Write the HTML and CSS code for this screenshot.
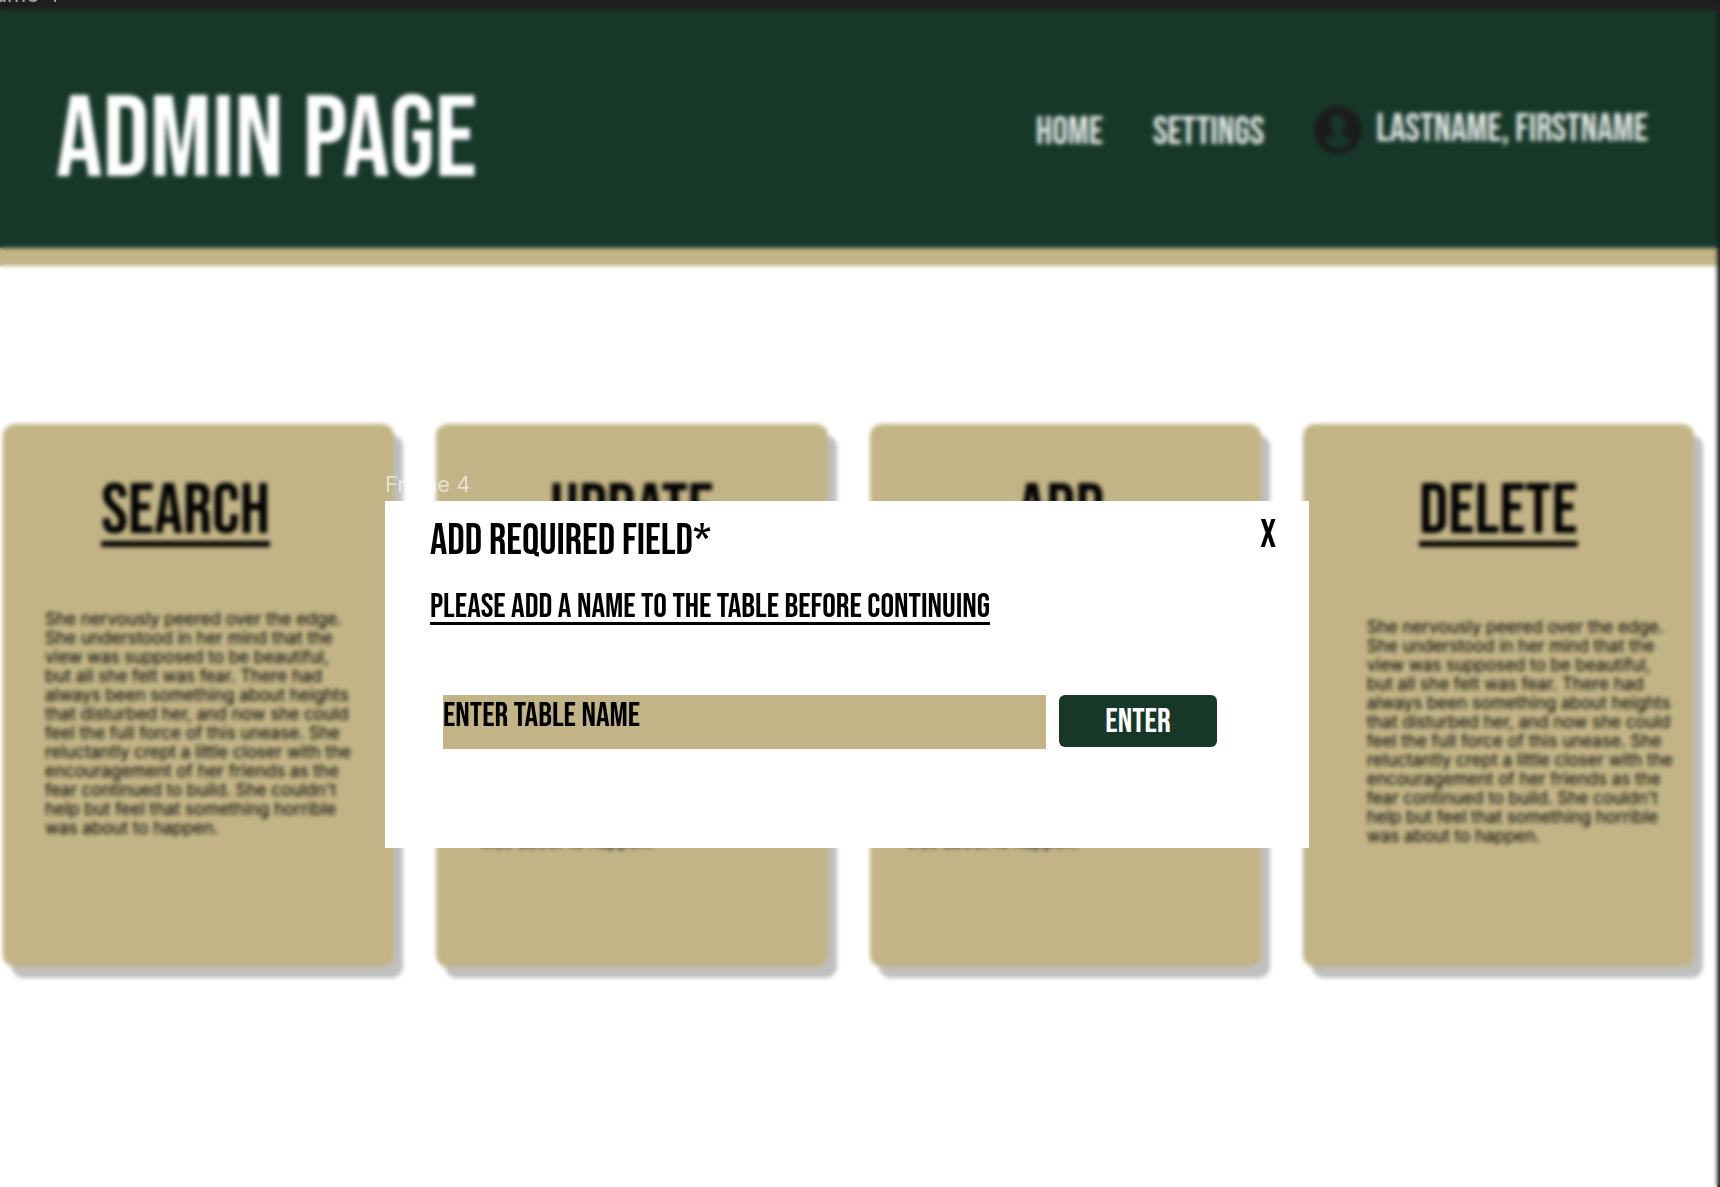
FILE: index.html
```html
<!DOCTYPE html>
<html lang="en">
<head>
<meta charset="utf-8">
<meta name="viewport" content="width=device-width, initial-scale=1">
<title>Admin Page</title>
<link rel="stylesheet" href="styles.css">
</head>
<body>
<div class="page">
  <header class="header">
    <h1 class="brand">Admin Page</h1>
    <nav class="nav">
      <a class="nav-link" href="#home">Home</a>
      <a class="nav-link" href="#settings">Settings</a>
      <a class="nav-user" href="#profile">
        <svg class="avatar" viewBox="0 0 48 48" aria-hidden="true">
          <circle cx="24" cy="24" r="24" fill="#1a1c1b"/>
          <path fill="#173829" d="M24 9c-4.400 0-7 3.400-7 8 0 3.500 1.400 6.600 3.400 8.200v3.300c0 .800-.500 1.400-1.300 1.700l-5.100 2c-1.700.700-2.700 1.900-2.700 3.600C14.500 39.600 19 42 24 42s9.500-2.400 12.700-6.200c0-1.700-1-2.900-2.700-3.600l-5.100-2c-.800-.300-1.300-.900-1.300-1.700v-3.300c2-1.600 3.400-4.700 3.400-8.200 0-4.600-2.600-8-7-8z"/>
        </svg>
        <span class="user-name">Lastname, Firstname</span>
      </a>
    </nav>
  </header>

  <main class="cards">
    <article class="card card-raised">
      <h2 class="card-title"><a href="#search">Search</a></h2>
      <p class="card-text">She nervously peered over the edge. She understood in her mind that the view was supposed to be beautiful, but all she felt was fear. There had always been something about heights that disturbed her, and now she could feel the full force of this unease. She reluctantly crept a little closer with the encouragement of her friends as the fear continued to build. She couldn't help but feel that something horrible was about to happen.</p>
    </article>
    <article class="card">
      <h2 class="card-title"><a href="#update">Update</a></h2>
      <p class="card-text">She nervously peered over the edge. She understood in her mind that the view was supposed to be beautiful, but all she felt was fear. There had always been something about heights that disturbed her, and now she could feel the full force of this unease. She reluctantly crept a little closer with the encouragement of her friends as the fear continued to build. She couldn't help but feel that something horrible was about to happen.</p>
    </article>
    <article class="card card-wide">
      <h2 class="card-title"><a href="#add">Add</a></h2>
      <p class="card-text">She nervously peered over the edge. She understood in her mind that the view was supposed to be beautiful, but all she felt was fear. There had always been something about heights that disturbed her, and now she could feel the full force of this unease. She reluctantly crept a little closer with the encouragement of her friends as the fear continued to build. She couldn't help but feel that something horrible was about to happen.</p>
    </article>
    <article class="card card-inset">
      <h2 class="card-title"><a href="#delete">Delete</a></h2>
      <p class="card-text">She nervously peered over the edge. She understood in her mind that the view was supposed to be beautiful, but all she felt was fear. There had always been something about heights that disturbed her, and now she could feel the full force of this unease. She reluctantly crept a little closer with the encouragement of her friends as the fear continued to build. She couldn't help but feel that something horrible was about to happen.</p>
    </article>
  </main>
</div>

<div class="overlay">
  <div class="frame-label frame-label-outer">Frame 4</div>
  <div class="dialog-wrap">
    <div class="frame-label">Frame 4</div>
    <section class="dialog" role="dialog" aria-labelledby="dialog-title">
      <div class="dialog-head">
        <h2 class="dialog-title" id="dialog-title">Add required field*</h2>
        <button class="close" type="button" aria-label="Close">X</button>
      </div>
      <p class="dialog-note">Please add a name to the table before continuing</p>
      <form class="dialog-form">
        <input class="field" type="text" aria-label="Table name" placeholder="Enter table name">
        <button class="enter" type="button">Enter</button>
      </form>
    </section>
  </div>
</div>
</body>
</html>
```
FILE: styles.css
```css
:root {
  --green: #173829;
  --gold: #c2b486;
  --canvas: #1e1e1e;
  --display: "Bebas Neue", "Open Sans Condensed", "Roboto Condensed", sans-serif;
}

* { box-sizing: border-box; }

body {
  margin: 0;
  background: var(--canvas);
  font-family: Inter, sans-serif;
  color: #000;
}

h1, h2, p { margin: 0; font-weight: 400; }
a { color: inherit; text-decoration: none; }
button, input { font: inherit; border: 0; padding: 0; border-radius: 0; }

.page {
  min-height: calc(100vh - 10px);
  margin: 10px 3px 0 0;
  background: #fff;
}

.header {
  display: flex;
  align-items: center;
  justify-content: space-between;
  min-height: 256px;
  padding: 8px 69px 0 56px;
  background: var(--green);
  border-bottom: 18px solid var(--gold);
  color: #fff;
  font-family: var(--display);
}

.brand {
  padding-top: 18px;
  font-size: 116px;
  line-height: 140px;
}

.nav {
  display: flex;
  align-items: center;
  gap: 50px;
  font-size: 39px;
  line-height: 48px;
  color: #e4e9e7;
}

.nav-user {
  display: flex;
  align-items: center;
  gap: 14px;
  padding-bottom: 6px;
}

.avatar { width: 48px; height: 48px; }

.cards {
  display: grid;
  grid-template-columns: repeat(4, 1fr);
  gap: 42px;
  padding: 158px 23px 80px 3px;
}

.card {
  min-height: 543px;
  padding: 44px 36px 40px 44px;
  background: var(--gold);
  border-radius: 12px;
  box-shadow: 9px 11px 0 #bfbfbf;
}

.card-title {
  margin: 0 0 68px -8px;
  font-family: var(--display);
  font-size: 72px;
  line-height: 88px;
  text-align: center;
}

.card-title a {
  text-decoration: underline;
  text-decoration-thickness: 6px;
  text-underline-offset: 8px;
}

.card-text { font-size: 17px; line-height: 19px; }

.card-raised { padding-right: 36px; padding-left: 42px; }
.card-raised .card-title { margin: 0 32px 54px 0; }
.card-wide { padding-left: 36px; }
.card-inset { padding-right: 20px; padding-left: 64px; }
.card-inset .card-title { margin: 0 0 62px -44px; }

.overlay {
  position: absolute;
  inset: 0;
  overflow: hidden;
  padding-right: 26px;
  backdrop-filter: blur(2px);
}

.frame-label {
  color: rgba(255, 255, 255, 0.6);
  font-size: 22px;
  line-height: 34px;
}

.frame-label-outer { margin: -23px 0 0 -26px; }

.dialog-wrap {
  width: min(924px, 100%);
  margin: 456px auto 0;
}

.dialog {
  min-height: 347px;
  padding: 16px 33px 40px 45px;
  background: #fff;
  font-family: var(--display);
}

.dialog-head {
  display: flex;
  align-items: flex-start;
  justify-content: space-between;
}

.dialog-title { font-size: 43px; line-height: 48px; }

.close {
  background: none;
  font-size: 39px;
  line-height: 38px;
  cursor: pointer;
}

.dialog-note {
  margin-top: 18px;
  font-size: 34px;
  line-height: 48px;
  text-decoration: underline;
  text-decoration-thickness: 3px;
  text-underline-offset: 5px;
}

.dialog-form {
  display: flex;
  align-items: flex-start;
  gap: 13px;
  margin: 64px 59px 0 13px;
}

.field {
  flex: 1;
  min-width: 0;
  height: 54px;
  padding-bottom: 14px;
  background: var(--gold);
  font-size: 34px;
  outline: 0;
}

.field::placeholder { color: #000; opacity: 1; }

.enter {
  width: 158px;
  height: 52px;
  border-radius: 6px;
  background: var(--green);
  color: #fff;
  font-size: 34px;
  cursor: pointer;
}
```
